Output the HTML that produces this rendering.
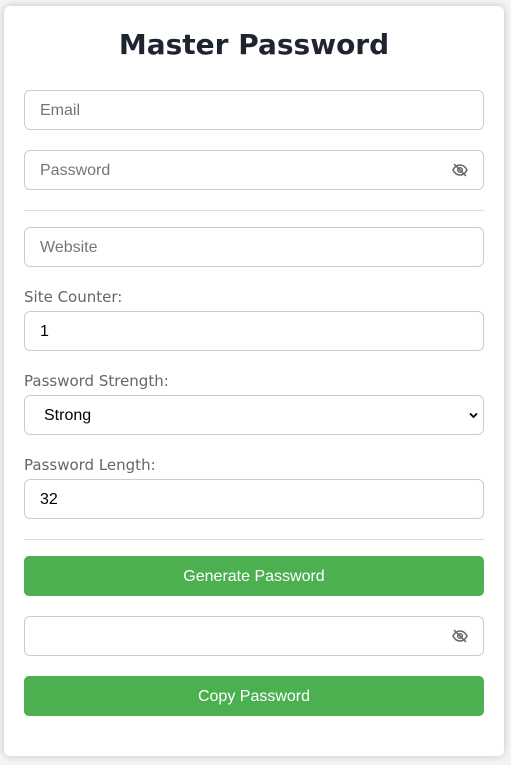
<!DOCTYPE html>
<html><head><style>
body{margin:0;background:#f4f4f4;width:511px;height:765px;overflow:hidden;font-family:"Liberation Sans",Arial,sans-serif}
.card{position:absolute;left:4px;top:6px;width:500px;height:750px;background:#fff;border-radius:6px;box-shadow:0 0 8px rgba(0,0,0,.2)}
h1{position:absolute;left:0;right:0;top:22px;margin:0;text-align:center;font-family:"DejaVu Sans",sans-serif;font-weight:bold;font-size:28px;color:#1f2530;line-height:34px}
.in{position:absolute;left:20px;height:38px;border:1px solid #ccc;border-radius:6px;font-size:16px;color:#757575;line-height:40px;padding-left:15px;box-sizing:content-box;width:443px}
.v{color:#000}
.hr{position:absolute;left:20px;width:460px;height:1px;background:#ddd}
.lab{position:absolute;left:20px;font-family:"DejaVu Sans",sans-serif;font-size:15px;color:#666}
.btn{position:absolute;left:20px;width:460px;height:40px;background:#4caf50;border-radius:5px;color:#fff;font-size:16px;text-align:center;line-height:41px}
.eye{position:absolute;right:15px;top:11px}
</style></head><body><div class="card">
<h1>Master Password</h1>
<div class="in" style="top:84px">Email</div>
<div class="in" style="top:144px">Password<svg class="eye" width="16" height="16" viewBox="0 0 16 16" fill="none" stroke="#666" stroke-width="1.5"><path d="M1 8c2-4 5-5 7-5s5 1 7 5c-2 4-5 5-7 5S3 12 1 8z"/><circle cx="8" cy="8" r="2.3"/><path d="M2 2l12 12"/></svg></div>
<div class="hr" style="top:204px"></div>
<div class="in" style="top:221px">Website</div>
<div class="lab" style="top:282px">Site Counter:</div>
<div class="in v" style="top:305px">1</div>
<div class="lab" style="top:366px">Password Strength:</div>
<div class="in v" style="top:389px;padding-left:19px;width:439px">Strong<svg style="position:absolute;right:5px;top:16px" width="9" height="7" viewBox="0 0 9 7"><path d="M1 1.5l3.5 3.5 3.5-3.5" fill="none" stroke="#000" stroke-width="1.8"/></svg></div>
<div class="lab" style="top:450px">Password Length:</div>
<div class="in v" style="top:473px">32</div>
<div class="hr" style="top:533px"></div>
<div class="btn" style="top:550px">Generate Password</div>
<div class="in" style="top:610px"><svg class="eye" width="16" height="16" viewBox="0 0 16 16" fill="none" stroke="#666" stroke-width="1.5"><path d="M1 8c2-4 5-5 7-5s5 1 7 5c-2 4-5 5-7 5S3 12 1 8z"/><circle cx="8" cy="8" r="2.3"/><path d="M2 2l12 12"/></svg></div>
<div class="btn" style="top:670px">Copy Password</div>
</div></body></html>
